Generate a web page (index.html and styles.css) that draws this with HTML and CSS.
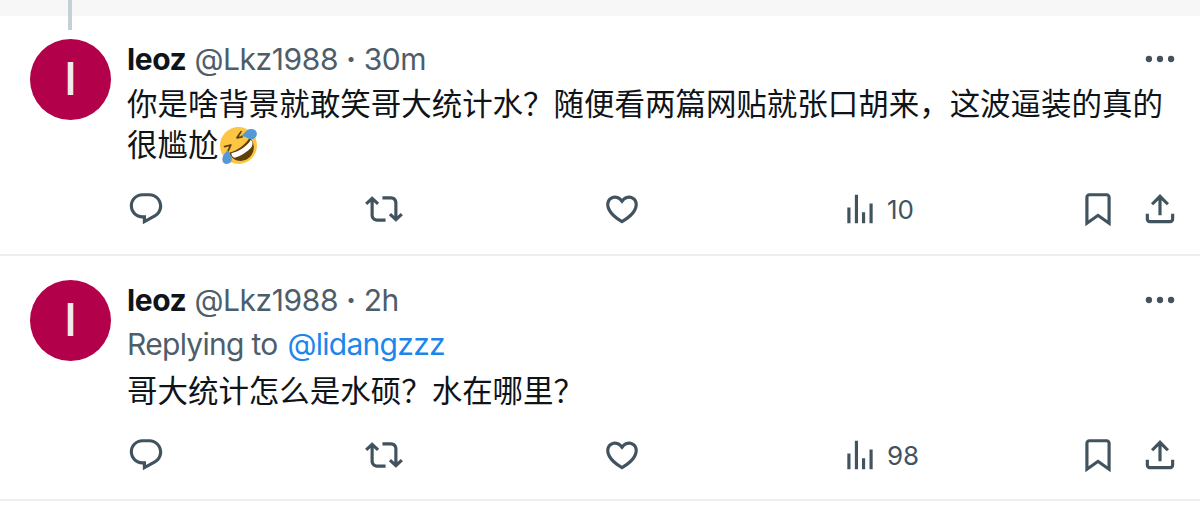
FILE: index.html
```html
<!DOCTYPE html>
<html lang="en">
<head>
    <meta charset="UTF-8">
    <meta name="viewport" content="width=device-width, initial-scale=1.0">
    <title>leoz (@Lkz1988)</title>
    <link rel="stylesheet" href="styles.css">
</head>
<body>
    <!-- Shared icons -->
    <svg class="sprite">
        <symbol id="reply" viewBox="0 0 24 24"><path d="M1.751 10c0-4.42 3.584-8 8.005-8h4.366c4.49 0 8.129 3.64 8.129 8.13 0 2.96-1.607 5.68-4.196 7.11l-8.054 4.46v-3.69h-.067c-4.49.1-8.183-3.51-8.183-8.01zm8.005-6c-3.317 0-6.005 2.69-6.005 6 0 3.37 2.77 6.08 6.138 6.01l.351-.01h1.761v2.3l5.087-2.81c1.951-1.08 3.163-3.13 3.163-5.36 0-3.39-2.744-6.13-6.129-6.13H9.756z"/></symbol>
        <symbol id="repost" viewBox="0 0 24 24"><path d="M4.5 3.88l4.432 4.14-1.364 1.46L5.5 7.55V16c0 1.1.896 2 2 2H13v2H7.5c-2.209 0-4-1.79-4-4V7.55L1.432 9.48.068 8.02 4.5 3.88zM16.5 6H11V4h5.5c2.209 0 4 1.79 4 4v8.45l2.068-1.93 1.364 1.46-4.432 4.14-4.432-4.14 1.364-1.46 2.068 1.93V8c0-1.1-.896-2-2-2z"/></symbol>
        <symbol id="like" viewBox="0 0 24 24"><path d="M16.697 5.5c-1.222-.06-2.679.51-3.89 2.16l-.805 1.09-.806-1.09C9.984 6.01 8.526 5.44 7.304 5.5c-1.243.07-2.349.78-2.91 1.91-.552 1.12-.633 2.78.479 4.82 1.074 1.97 3.257 4.27 7.129 6.61 3.87-2.34 6.052-4.64 7.126-6.61 1.111-2.04 1.03-3.7.477-4.82-.561-1.13-1.666-1.84-2.908-1.91zm4.187 7.69c-1.351 2.48-4.001 5.12-8.379 7.67l-.503.3-.504-.3c-4.379-2.55-7.029-5.19-8.382-7.67-1.36-2.5-1.41-4.86-.514-6.67.887-1.79 2.647-2.91 4.601-3.01 1.651-.09 3.368.56 4.798 2.01 1.429-1.45 3.146-2.1 4.796-2.01 1.954.1 3.714 1.22 4.601 3.01.896 1.81.846 4.17-.514 6.67z"/></symbol>
        <symbol id="views" viewBox="0 0 24 24"><path d="M8.75 21V3h2v18h-2zM18 21V8.5h2V21h-2zM4 21l.004-10h2L6 21H4zm9.248 0v-7h2v7h-2z"/></symbol>
        <symbol id="bookmark" viewBox="0 0 24 24"><path d="M4 4.5C4 3.12 5.119 2 6.5 2h11C18.881 2 20 3.12 20 4.5v18.44l-8-5.71-8 5.71V4.5zM6.5 4c-.276 0-.5.22-.5.5v14.56l6-4.29 6 4.29V4.5c0-.28-.224-.5-.5-.5h-11z"/></symbol>
        <symbol id="share" viewBox="0 0 24 24"><path d="M12 2.59l5.7 5.7-1.41 1.42L13 6.41V16h-2V6.41l-3.3 3.3-1.41-1.42L12 2.59zM21 15l-.02 3.51c0 1.38-1.12 2.49-2.5 2.49H5.5C4.11 21 3 19.88 3 18.5V15h2v3.5c0 .28.22.5.5.5h12.98c.28 0 .5-.22.5-.5L19 15h2z"/></symbol>
        <symbol id="more" viewBox="0 0 24 24"><circle cx="5" cy="12" r="2"/><circle cx="12" cy="12" r="2"/><circle cx="19" cy="12" r="2"/></symbol>
    </svg>

    <!-- Thread line from the tweet above -->
    <div class="thread-top"><div class="thread-line"></div></div>

    <article class="tweet">
        <div class="avatar"><span class="initial">l</span></div>
        <div class="content">
            <div class="header">
                <span class="name">leoz</span>
                <span class="handle">@Lkz1988</span>
                <span class="dot">·</span>
                <span class="time">30m</span>
                <svg class="icon more"><use href="#more"/></svg>
            </div>
            <p class="text" lang="zh">你是啥背景就敢笑哥大统计水？随便看两篇网贴就张口胡来，这波逼装的真的很尴尬<svg class="emoji" viewBox="0 0 36 36">
                <circle cx="18" cy="18" r="18" fill="#fcc544"/>
                <path d="M9 25c8-2 16-8 20-15 6 7 5 16-2 21-7 4-15 2-18-6z" fill="#5f3f08"/>
                <path d="M11 25.500c8-1.500 16-7.500 19-13 2 1.500 2 4.500 1 6.500-4 5-10 9-17 11-2-1-3-3-3-4.500z" fill="#fff"/>
                <path d="M4.500 19l6-1.500-2.500 5.500M20.500 4.500l-4 6 5-.8" fill="none" stroke="#5f3f08" stroke-width="1.700" stroke-linecap="round" stroke-linejoin="round"/>
                <path d="M20 8.500c4-1 5-6.500 10-6.500 4-.5 7 3 5.500 6.500-1.500 4-6 4-8.500 2.500-2-1.500-4-2-7-2.500zM7.500 21c0 4 4 6 4 10 0 3-2 5-5 5s-5-3-4-6c1-4 4-5 5-9z" fill="#5598d6"/>
            </svg></p>
            <div class="actions">
                <div class="action"><svg class="icon"><use href="#reply"/></svg></div>
                <div class="action"><svg class="icon"><use href="#repost"/></svg></div>
                <div class="action"><svg class="icon"><use href="#like"/></svg></div>
                <div class="action"><svg class="icon"><use href="#views"/></svg><span class="count">10</span></div>
                <div class="tools">
                    <svg class="icon"><use href="#bookmark"/></svg>
                    <svg class="icon"><use href="#share"/></svg>
                </div>
            </div>
        </div>
    </article>

    <article class="tweet">
        <div class="avatar"><span class="initial">l</span></div>
        <div class="content">
            <div class="header">
                <span class="name">leoz</span>
                <span class="handle">@Lkz1988</span>
                <span class="dot">·</span>
                <span class="time">2h</span>
                <svg class="icon more"><use href="#more"/></svg>
            </div>
            <div class="replying">Replying to <a class="mention">@lidangzzz</a></div>
            <p class="text" lang="zh">哥大统计怎么是水硕？水在哪里？</p>
            <div class="actions">
                <div class="action"><svg class="icon"><use href="#reply"/></svg></div>
                <div class="action"><svg class="icon"><use href="#repost"/></svg></div>
                <div class="action"><svg class="icon"><use href="#like"/></svg></div>
                <div class="action"><svg class="icon"><use href="#views"/></svg><span class="count">98</span></div>
                <div class="tools">
                    <svg class="icon"><use href="#bookmark"/></svg>
                    <svg class="icon"><use href="#share"/></svg>
                </div>
            </div>
        </div>
    </article>
</body>
</html>
```
FILE: styles.css
```css
:root {
    --text: #0f1419;
    --grey: #4d5d69;
    --icon: #425360;
    --blue: #1d86ec;
    --line: #ebefef;
    --avatar: #b3004b;
}

* {
    box-sizing: border-box;
}

body {
    margin: 0;
    height: 513px;
    overflow: hidden;
    background: white;
    color: var(--text);
    font-family: Inter, 'Noto Sans CJK SC', sans-serif;
}

.sprite {
    display: none;
}

/* Thread line */
.thread-top {
    height: 16px;
    padding-left: 68px;
    background: #f7f7f7;
}

.thread-line {
    width: 4px;
    height: 30px;
    background: #c5d0d6;
}

/* Tweets */
.tweet {
    display: flex;
    gap: 16px;
    height: 245px;
    padding: 24px 21px 0 30px;
    border-bottom: 2px solid var(--line);
}

.thread-top + .tweet {
    height: 240px;
    padding-top: 23px;
}

.avatar {
    display: flex;
    flex: none;
    align-items: center;
    justify-content: center;
    width: 81px;
    height: 81px;
    border-radius: 50%;
    background: var(--avatar);
}

.initial {
    color: #f6e6ed;
    font-family: Roboto, sans-serif;
    font-size: 45px;
    font-weight: 500;
    line-height: 83px;
}

.content {
    display: flex;
    flex: 1;
    flex-direction: column;
}

.header {
    display: flex;
    align-items: center;
    gap: 8px;
    height: 39px;
    color: var(--grey);
    font-size: 30px;
    letter-spacing: -0.4px;
}

.name {
    color: var(--text);
    font-weight: 700;
}

.dot {
    font-weight: 700;
}

.more {
    margin-left: auto;
}

.replying {
    height: 46px;
    color: var(--grey);
    font-size: 30px;
    line-height: 51px;
    letter-spacing: -0.7px;
}

.mention {
    margin-left: 2px;
    color: var(--blue);
}

.text {
    margin: 4px 0 0;
    font-family: 'Noto Sans CJK SC', sans-serif;
    font-size: 30.47px;
    line-height: 41px;
}

.emoji {
    width: 37px;
    height: 37px;
    margin-left: 2px;
    vertical-align: -8px;
}

/* Action bar */
.actions {
    display: flex;
    margin-top: auto;
    padding-bottom: 26px;
}

.tweet + .tweet .actions {
    padding-bottom: 25px;
}

.action {
    display: flex;
    align-items: center;
    width: 238px;
}

.icon {
    flex: none;
    width: 38px;
    height: 38px;
    fill: var(--icon);
}

.count {
    margin-left: 8px;
    padding-top: 1px;
    color: var(--icon);
    font-size: 26px;
}

.tools {
    display: flex;
    gap: 24px;
}
```
